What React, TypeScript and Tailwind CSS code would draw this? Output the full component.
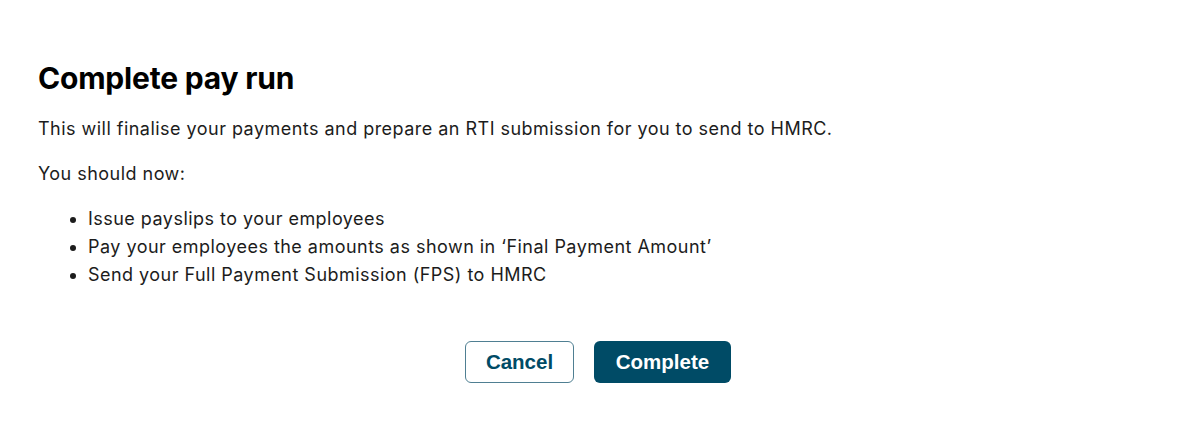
export default function App() {
  return (
    <div className="w-[1177px] h-[431px] bg-white font-['Inter',sans-serif] text-[#1c1c1c]">
      <div className="pl-[38px] pr-[19px] pt-[56px]">
        <h1 className="text-[30px] leading-[44px] font-bold text-black tracking-[-0.2px]">Complete pay run</h1>
        <div className="text-[18px] leading-[28px] tracking-[0.47px]">
          <p className="mt-[15px]">
            This will finalise your payments and prepare an RTI submission for you to send to HMRC.
          </p>
          <p className="mt-[17px]">You should now:</p>
          <ul className="mt-[17px] list-disc pl-[50px]">
            <li>Issue payslips to your employees</li>
            <li>Pay your employees the amounts as shown in ‘Final Payment Amount’</li>
            <li>Send your Full Payment Submission (FPS) to HMRC</li>
          </ul>
        </div>
        <div className="mt-[52px] flex justify-center gap-[20px]">
          <button className="h-[42px] w-[109px] rounded-[6px] border border-[#4f7f92] bg-white font-['Liberation_Sans',sans-serif] text-[20.5px] font-bold text-[#004b66]">
            Cancel
          </button>
          <button className="h-[42px] w-[137px] rounded-[6px] bg-[#004b66] font-['Liberation_Sans',sans-serif] text-[20.5px] font-bold text-white">
            Complete
          </button>
        </div>
      </div>
    </div>
  );
}
